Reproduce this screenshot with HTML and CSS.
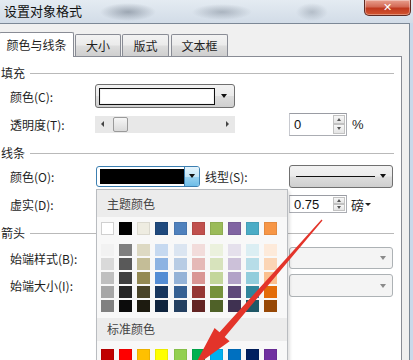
FILE: index.html
```html
<!DOCTYPE html>
<html lang="zh">
<head>
<meta charset="utf-8">
<title>设置对象格式</title>
<link rel="stylesheet" href="styles.css">
</head>
<body>
<div class="screen">
  <div class="titlebar">
    <span class="title">设置对象格式</span>
    <div class="close"><span>✕</span></div>
  </div>
  <div class="frame">
    <div class="client">
      <div class="tabs">
        <div class="tab active">颜色与线条</div>
        <div class="tab t2">大小</div>
        <div class="tab t3">版式</div>
        <div class="tab t4">文本框</div>
      </div>
      <div class="panel">
        <div class="sec s1"><span>填充</span><i></i></div>
        <div class="row rc">
          <label>颜色(C):</label>
          <div class="combo fillcombo"><div class="chip chip-white"></div><b class="arr"></b></div>
          <div></div>
        </div>
        <div class="row rt">
          <label>透明度(T):</label>
          <div class="slider"><span class="sl-l"></span><span class="thumb"></span><span class="sl-r"></span></div>
          <div class="cell">
            <div class="num h23"><span class="val">0</span><div class="spin"><div class="sp up"><b></b></div><div class="sp dn"><b></b></div></div></div>
            <span class="unit">%</span>
          </div>
        </div>
        <div class="sec s2"><span>线条</span><i></i></div>
        <div class="row ro">
          <label>颜色(O):</label>
          <div class="cell">
            <div class="combo linecolor"><div class="chip chip-black"></div><div class="dd"><b class="arr"></b></div></div>
            <span class="lbl2">线型(S):</span>
          </div>
          <div class="combo linestyle"><div class="stroke"></div><b class="arr"></b></div>
        </div>
        <div class="row rd">
          <label>虚实(D):</label>
          <div></div>
          <div class="cell">
            <div class="num h18"><span class="val">0.75</span><div class="spin"><div class="sp up"><b></b></div><div class="sp dn"><b></b></div></div></div>
            <span class="unit2">磅<b class="tri"></b></span>
          </div>
        </div>
        <div class="sec s3"><span>箭头</span><i></i></div>
        <div class="row rb">
          <label>始端样式(B):</label>
          <div></div>
          <div class="combo dis h22"><b class="arr"></b></div>
        </div>
        <div class="row ri">
          <label>始端大小(I):</label>
          <div></div>
          <div class="combo dis h23"><b class="arr"></b></div>
        </div>
      </div>
    </div>
  </div>

  <div class="palette">
    <div class="ph">主题颜色</div>
    <div class="sw-area">
      <div class="grid theme">
        <span class="sw swwhite" style="background:#ffffff"></span>
        <span class="sw" style="background:#000000"></span>
        <span class="sw" style="background:#eeece1"></span>
        <span class="sw" style="background:#1f497d"></span>
        <span class="sw" style="background:#4f81bd"></span>
        <span class="sw" style="background:#c0504d"></span>
        <span class="sw" style="background:#9bbb59"></span>
        <span class="sw" style="background:#8064a2"></span>
        <span class="sw" style="background:#4bacc6"></span>
        <span class="sw" style="background:#f79646"></span>
      </div>
      <div class="grid shades">
        <span class="sh" style="background:#f2f2f2"></span>
        <span class="sh" style="background:#7f7f7f"></span>
        <span class="sh" style="background:#ddd9c3"></span>
        <span class="sh" style="background:#c6d9f0"></span>
        <span class="sh" style="background:#dbe5f1"></span>
        <span class="sh" style="background:#f2dcdb"></span>
        <span class="sh" style="background:#ebf1dd"></span>
        <span class="sh" style="background:#e5e0ec"></span>
        <span class="sh" style="background:#dbeef3"></span>
        <span class="sh" style="background:#fdeada"></span>

        <span class="sh" style="background:#d9d9d9"></span>
        <span class="sh" style="background:#595959"></span>
        <span class="sh" style="background:#c4bd97"></span>
        <span class="sh" style="background:#8db3e2"></span>
        <span class="sh" style="background:#b8cce4"></span>
        <span class="sh" style="background:#e5b9b7"></span>
        <span class="sh" style="background:#d7e3bc"></span>
        <span class="sh" style="background:#ccc1d9"></span>
        <span class="sh" style="background:#b7dde8"></span>
        <span class="sh" style="background:#fbd5b5"></span>

        <span class="sh" style="background:#bfbfbf"></span>
        <span class="sh" style="background:#3f3f3f"></span>
        <span class="sh" style="background:#938953"></span>
        <span class="sh" style="background:#548dd4"></span>
        <span class="sh" style="background:#95b3d7"></span>
        <span class="sh" style="background:#d99694"></span>
        <span class="sh" style="background:#c3d69b"></span>
        <span class="sh" style="background:#b2a2c7"></span>
        <span class="sh" style="background:#92cddc"></span>
        <span class="sh" style="background:#fac08f"></span>

        <span class="sh" style="background:#a6a6a6"></span>
        <span class="sh" style="background:#262626"></span>
        <span class="sh" style="background:#494429"></span>
        <span class="sh" style="background:#17365d"></span>
        <span class="sh" style="background:#366092"></span>
        <span class="sh" style="background:#953734"></span>
        <span class="sh" style="background:#76923c"></span>
        <span class="sh" style="background:#5f497a"></span>
        <span class="sh" style="background:#31859b"></span>
        <span class="sh" style="background:#e36c09"></span>

        <span class="sh" style="background:#808080"></span>
        <span class="sh" style="background:#0c0c0c"></span>
        <span class="sh" style="background:#1d1b10"></span>
        <span class="sh" style="background:#0f243e"></span>
        <span class="sh" style="background:#244061"></span>
        <span class="sh" style="background:#632423"></span>
        <span class="sh" style="background:#4f6128"></span>
        <span class="sh" style="background:#3f3151"></span>
        <span class="sh" style="background:#205867"></span>
        <span class="sh" style="background:#974806"></span>
      </div>
    </div>
    <div class="ph ph2">标准颜色</div>
    <div class="sw-area std">
      <div class="grid theme">
        <span class="sw" style="background:#c00000"></span>
        <span class="sw" style="background:#ff0000"></span>
        <span class="sw" style="background:#ffc000"></span>
        <span class="sw" style="background:#ffff00"></span>
        <span class="sw" style="background:#92d050"></span>
        <span class="sw" style="background:#00b050"></span>
        <span class="sw" style="background:#00b0f0"></span>
        <span class="sw" style="background:#0070c0"></span>
        <span class="sw" style="background:#002060"></span>
        <span class="sw" style="background:#7030a0"></span>
      </div>
    </div>
  </div>

  <svg class="arrow" width="413" height="360" viewBox="0 0 413 360">
    <polygon points="322.5,220.5 224.7,336.9 229.6,341.2 193.9,367 214.6,328 219.5,332.3 321.5,219.5" fill="#e3342a"/>
  </svg>
</div>
</body>
</html>
```

FILE: styles.css
```css
* { box-sizing: border-box; }
html, body { margin: 0; padding: 0; }
body {
  width: 413px;
  height: 360px;
  overflow: hidden;
  font-family: "Noto Sans CJK SC", "Noto Sans", sans-serif;
  font-size: 12px;
  color: #1e1e1e;
  background: #c9d9ea;
}
.screen {
  position: relative;
  width: 413px;
  height: 360px;
  overflow: hidden;
}

/* title bar */
.titlebar {
  height: 23px;
  display: flex;
  align-items: flex-start;
  background:
    radial-gradient(ellipse 28px 9px at 128px 12px, rgba(80,92,108,.45), transparent),
    radial-gradient(ellipse 30px 8px at 222px 12px, rgba(80,92,108,.35), transparent),
    radial-gradient(ellipse 16px 9px at 312px 12px, rgba(80,92,108,.28), transparent),
    linear-gradient(#e4ebf2, #d2dce7);
}
.title {
  padding-left: 4px;
  line-height: 22px;
  font-size: 13px;
  color: #111;
}
.close {
  margin-left: auto;
  margin-right: 2px;
  width: 47px;
  height: 16px;
  border: 1px solid #5e2a22;
  border-top: none;
  border-radius: 0 0 5px 5px;
  background: linear-gradient(#e9a08f, #d36a55 45%, #c0391f 55%, #d2552f);
  display: flex;
  justify-content: center;
  align-items: center;
  color: #fff;
  font-size: 11px;
  font-weight: bold;
  font-family: "DejaVu Sans", sans-serif;
  box-shadow: inset 0 0 0 1px rgba(255,255,255,.35);
}

/* window body */
.frame { display: flex; }
.client {
  width: 410px;
  height: 337px;
  background: #f0f0f0;
  border-top: 1px solid #7c8896;
  border-right: 1px solid #7c8896;
  padding-top: 8px;
  padding-right: 7px;
}

/* tabs */
.tabs {
  display: flex;
  align-items: flex-end;
  height: 24px;
  position: relative;
  z-index: 2;
}
.tab {
  height: 22px;
  display: flex;
  align-items: center;
  justify-content: center;
  border: 1px solid #898c95;
  border-bottom: none;
  border-radius: 2px 2px 0 0;
  background: linear-gradient(#f3f3f3, #ebebeb 48%, #dddddd 52%, #cfcfcf);
  font-size: 12px;
}
.tab.active {
  width: 75px;
  height: 25px;
  margin-left: -1px;
  margin-bottom: -1px;
  background: #fff;
  padding-bottom: 1px;
}
.t2 { width: 46px; margin-left: 1px; }
.t3 { width: 47px; margin-left: 1px; }
.t4 { width: 57px; margin-left: 2px; }

/* panel */
.panel {
  width: 402px;
  height: 320px;
  background: #fff;
  border: 1px solid #898c95;
  border-left: none;
}
.sec {
  display: flex;
  align-items: center;
  height: 14px;
  padding-right: 7px;
}
.sec span { padding-left: 1px; line-height: 14px; }
.sec i {
  flex: 1;
  height: 1px;
  background: #b9b9b9;
  margin-left: 5px;
}
.s1 { margin-top: 9px; }
.s2 { margin-top: 10px; }
.s3 { margin-top: 12px; }

.row {
  display: grid;
  grid-template-columns: 95px 194px 104px;
  align-items: center;
}
.row label { padding-left: 10px; white-space: nowrap; }
.cell { display: flex; align-items: center; }
.rc { height: 24px; margin-top: 4px; }
.rt { height: 24px; margin-top: 4px; }
.ro { height: 24px; margin-top: 4px; }
.rd { height: 20px; margin-top: 6px; }
.rb { height: 22px; margin-top: 7px; }
.ri { height: 23px; margin-top: 5px; }

/* combos */
.combo {
  position: relative;
  display: flex;
  align-items: center;
  border: 1px solid #707070;
  border-radius: 3px;
  background: linear-gradient(#f2f2f2, #ebebeb 48%, #dddddd 52%, #cfcfcf);
}
.arr {
  display: block;
  width: 0;
  height: 0;
  border-left: 3.5px solid transparent;
  border-right: 3.5px solid transparent;
  border-top: 4px solid #111;
}
.fillcombo {
  width: 140px;
  height: 24px;
  padding: 0 7px 0 3px;
  justify-content: space-between;
}
.chip { height: 17px; border: 1px solid #111; }
.chip-white { width: 116px; background: #fff; box-shadow: inset 0 0 0 1px #f4f4f4; }

.linecolor {
  width: 104px;
  height: 21px;
  margin-left: 1px;
  border-color: #3c7fb1;
  background: #fff;
  padding: 2px 0 2px 3px;
}
.chip-black { width: 84px; height: 15px; background: #000; border: none; }
.linecolor .dd {
  margin-left: auto;
  width: 15px;
  height: 19px;
  margin-top: -2px;
  margin-bottom: -2px;
  border-left: 1px solid #3c7fb1;
  border-radius: 0 2px 2px 0;
  background: linear-gradient(#e5f4fc, #c4e5f6 50%, #98d1ef 52%, #6dbde8);
  display: flex;
  align-items: center;
  justify-content: center;
}
.lbl2 { margin-left: 5px; white-space: nowrap; }

.linestyle {
  width: 104px;
  height: 23px;
  padding: 0 6px 0 6px;
  justify-content: space-between;
}
.stroke { width: 79px; height: 1px; background: #111; }

.dis {
  width: 104px;
  border-color: #adb2b5;
  background: #f4f4f4;
  justify-content: flex-end;
  padding-right: 6px;
}
.dis .arr { border-top-color: #8a8a8a; }
.h22 { height: 22px; }
.h23 { height: 23px; }
.h18 { height: 18px; }

/* slider */
.slider {
  width: 140px;
  height: 17px;
  background: #e8e8e8;
  display: flex;
  align-items: center;
  padding: 0 6px 0 6px;
}
.sl-l, .sl-r {
  width: 0; height: 0;
  border-top: 3px solid transparent;
  border-bottom: 3px solid transparent;
}
.sl-l { border-right: 3px solid #444; }
.sl-r { border-left: 3px solid #444; margin-left: auto; }
.thumb {
  margin-left: 9px;
  width: 15px;
  height: 15px;
  border: 1px solid #9a9a9a;
  border-radius: 2px;
  background: linear-gradient(#f6f6f6, #dadada);
}

/* numeric input */
.num {
  width: 58px;
  display: flex;
  align-items: center;
  background: #fff;
  border: 1px solid #abadb3;
  border-top-color: #9a9ca3;
  border-left-color: #c8cad0;
  padding: 1px;
}
.val {
  padding-left: 3px;
  font-family: "Liberation Sans", "Noto Sans", sans-serif;
  font-size: 13px;
  color: #111;
}
.spin {
  margin-left: auto;
  width: 12px;
  height: 100%;
  display: flex;
  flex-direction: column;
}
.sp {
  flex: 1;
  border: 1px solid #c2c2c2;
  background: linear-gradient(#f7f7f7, #e4e4e4);
  display: flex;
  align-items: center;
  justify-content: center;
}
.sp b { display: block; width: 0; height: 0; border-left: 2.5px solid transparent; border-right: 2.5px solid transparent; }
.up b { border-bottom: 3px solid #555; }
.dn b { border-top: 3px solid #555; }
.unit { margin-left: 5px; font-size: 13px; font-family: "Liberation Sans", sans-serif; }
.unit2 { margin-left: 4px; display: flex; align-items: center; font-size: 13px; }
.tri {
  display: block;
  margin-left: 1px;
  width: 0; height: 0;
  border-left: 3px solid transparent;
  border-right: 3px solid transparent;
  border-top: 3px solid #222;
}

/* color palette dropdown */
.palette {
  position: absolute;
  left: 96px;
  top: 189px;
  width: 192px;
  height: 180px;
  border: 1px solid #b9bcc0;
  background: #f7f7f7;
  box-shadow: 2px 2px 3px rgba(0,0,0,.12);
  z-index: 5;
}
.ph {
  height: 27px;
  line-height: 27px;
  padding-left: 10px;
  background: #ececec;
  color: #444;
  font-size: 12px;
}
.ph2 { height: 23px; line-height: 22px; }
.sw-area { padding: 5px 0 6px 4px; background: #f8f8f8; }
.std { padding-top: 8px; }
.grid {
  display: grid;
  grid-template-columns: repeat(10, 13px);
  column-gap: 5.15px;
}
.sw { height: 13px; box-shadow: inset 0 0 0 1px rgba(0,0,0,.08); }
.swwhite { box-shadow: inset 0 0 0 1px #d0d0d0; }
.shades { margin-top: 9px; row-gap: 2px; }
.sh { height: 12px; }

/* annotation arrow */
.arrow {
  position: absolute;
  left: 0;
  top: 0;
  z-index: 10;
  pointer-events: none;
}
```
